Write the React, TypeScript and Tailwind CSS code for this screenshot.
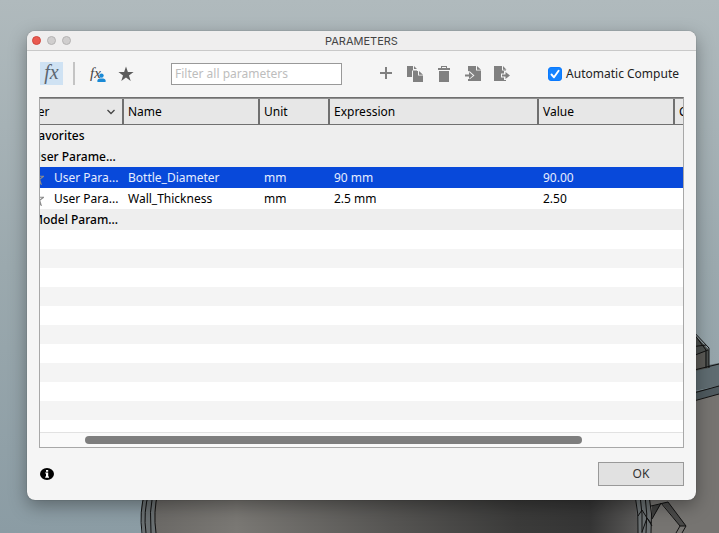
import { useEffect, useLayoutEffect, useRef, useState } from "react";
import type { ReactNode } from "react";

type Row =
  | { kind: "group"; label: string }
  | {
      kind: "param";
      label: string;
      name: string;
      unit: string;
      expression: string;
      value: string;
      selected?: boolean;
    };

const rows: Row[] = [
  { kind: "group", label: "Favorites" },
  { kind: "group", label: "User Parame..." },
  {
    kind: "param",
    label: "User Para...",
    name: "Bottle_Diameter",
    unit: "mm",
    expression: "90 mm",
    value: "90.00",
    selected: true,
  },
  {
    kind: "param",
    label: "User Para...",
    name: "Wall_Thickness",
    unit: "mm",
    expression: "2.5 mm",
    value: "2.50",
  },
  { kind: "group", label: "Model Param..." },
];

function Scene() {
  return (
    <svg
      className="absolute inset-0 h-full w-full"
      viewBox="0 0 719 533"
      preserveAspectRatio="none"
      aria-hidden="true"
    >
      <defs>
        <linearGradient id="sky" x1="0" y1="0" x2="0" y2="1">
          <stop offset="0" stopColor="#b0babd" />
          <stop offset="0.5" stopColor="#9ba9ae" />
          <stop offset="1" stopColor="#8b9ca4" />
        </linearGradient>
        <linearGradient id="body" x1="0" y1="0" x2="1" y2="0">
          <stop offset="0" stopColor="#6b6966" />
          <stop offset="0.17" stopColor="#7a7874" />
          <stop offset="0.5" stopColor="#555452" />
          <stop offset="0.75" stopColor="#3b3b3a" />
          <stop offset="0.9" stopColor="#353535" />
          <stop offset="1" stopColor="#5a5958" />
        </linearGradient>
      </defs>
      <rect width="719" height="533" fill="url(#sky)" />
      <path d="M640 406 719 392V533H640Z" fill="#767471" />
      <path d="M640 378 719 363V386L640 402Z" fill="#5f6c71" />
      <path d="M640 404 719 386V394L640 414Z" fill="#4f5a5f" />
      <path d="M690 330 709 350V368L690 372Z" fill="#4d514f" />
      <path d="M690 355 705 352V368L690 372Z" fill="#5b5a56" />
      <g fill="none" stroke="#111" strokeWidth="1">
        <path d="M690 328 709 348V368M694 334 706 350V368M690 347 706 345M690 357 708 350" />
        <path d="M690 371 719 364M690 394 719 386M690 402 719 394" />
      </g>
      <path d="M145 490Q138 512 143 533H651L649 490Z" fill="#6a7072" />
      <path d="M157 490Q152 512 156 533H638L635 490Z" fill="url(#body)" />
      <g fill="none" stroke="#111" strokeWidth="1">
        <path d="M145 492Q139 512 142 533M149 492Q143 512 146 533M153 492Q149 512 151 533M158 492Q153 512 156 533" />
        <path d="M635 495Q639 514 638 533M640 495Q643 514 642 533M645 495Q648 514 646 533M649 495Q653 514 651 533M638 516 642 510 652 526M642 532 647 518 651 523" />
      </g>
      <path d="M652 506 661 504 652 519Z" fill="#3f3f3e" />
      <path d="M662 503 668 502 686 526 680 526Z" fill="#4a4a49" />
      <path
        d="M651 506 668 502 686 526 682 533M661 503 680 526 676 533M661 503 652 519M680 526 686 526"
        fill="none"
        stroke="#111"
      />
    </svg>
  );
}

function ToolButton({ label, children }: { label: string; children: ReactNode }) {
  return (
    <button
      type="button"
      aria-label={label}
      className="flex h-6 w-6 shrink-0 items-center justify-center text-[#808080]"
    >
      {children}
    </button>
  );
}

function Star({ className, outline }: { className: string; outline?: boolean }) {
  return (
    <svg viewBox="0 0 16 16" className={className} aria-hidden="true">
      <path
        d="M8 .6 9.9 6H15.6L11 9.4 12.7 15 8 11.6 3.3 15 5 9.4 .4 6H6.1Z"
        fill={outline ? "none" : "currentColor"}
        stroke={outline ? "currentColor" : "none"}
        strokeWidth="1.300"
      />
    </svg>
  );
}

function Toolbar() {
  const [compute, setCompute] = useState(true);
  return (
    <div className="flex h-[46px] shrink-0 items-center pr-[17px] pb-px pl-[13px]">
      <button
        type="button"
        aria-label="All parameters"
        aria-pressed="true"
        className="flex h-[23px] w-[23px] shrink-0 items-center justify-center bg-[#cfe2f3] pb-1 font-['Liberation_Serif',serif] text-[20px] leading-none text-[#5c6670] italic"
      >
        fx
      </button>
      <div className="ml-2.5 h-[23px] w-0.5 shrink-0 bg-[#c4c4c4]" />
      <button
        type="button"
        aria-label="User parameters"
        className="relative ml-2.5 h-6 w-6 shrink-0"
      >
        <span className="flex h-[18px] items-center pl-[5px] font-['Liberation_Serif',serif] text-[15px] leading-none text-[#444] italic">
          fx
        </span>
        <svg viewBox="0 0 9 9" className="absolute right-[3px] bottom-1 h-[9px] w-[9px]" aria-hidden="true">
          <circle cx="4.5" cy="2.6" r="2.2" fill="#1a8ad6" />
          <path d="M.4 9V7.6Q.4 5.6 2.6 5.4H6.4Q8.6 5.6 8.6 7.6V9Z" fill="#1a8ad6" />
        </svg>
      </button>
      <button
        type="button"
        aria-label="Favorites"
        className="ml-[5px] flex h-6 w-6 shrink-0 items-center justify-center text-[#5c5c5c]"
      >
        <Star className="h-4 w-4" />
      </button>
      <input
        type="text"
        aria-label="Filter all parameters"
        placeholder="Filter all parameters"
        className="ml-[33px] h-[22px] w-[171px] min-w-0 border border-[#999] bg-white px-[3px] outline-none placeholder:text-[#bdbdbd]"
      />
      <div className="ml-8 flex gap-[5px]">
        <ToolButton label="Add parameter">
          <svg viewBox="0 0 16 16" className="h-4 w-4" aria-hidden="true">
            <path d="M7 1H9V6H14V8H9V13H7V8H2V6H7Z" fill="currentColor" />
          </svg>
        </ToolButton>
        <ToolButton label="Copy parameter">
          <svg viewBox="0 0 16 16" className="h-4 w-4" fill="currentColor" aria-hidden="true">
            <path d="M0 0H6V4H10V4.600H5V11H0ZM7 0 10 3H7Z" />
            <path d="M6 5H11V9.500H16V16H6ZM12 5 16 8.700H12Z" />
          </svg>
        </ToolButton>
        <ToolButton label="Delete parameter">
          <svg viewBox="0 0 16 16" className="h-4 w-4" fill="currentColor" aria-hidden="true">
            <path d="M2 2H5V0H11V2H14V4H2ZM6 1V2H10V1ZM3 5H13V16H3Z" fillRule="evenodd" />
          </svg>
        </ToolButton>
        <ToolButton label="Import parameters">
          <svg viewBox="0 0 16 16" className="h-4 w-4" fill="currentColor" aria-hidden="true">
            <path d="M3 0H11V4.500H16V15H3V13H5L9.500 9.500 5 5.500 3 5ZM12 0 16 3.700H12Z" />
            <path d="M0 8.500H4V6L8 9.500 4 13V10.500H0Z" />
          </svg>
        </ToolButton>
        <ToolButton label="Export parameters">
          <svg viewBox="0 0 16 16" className="h-4 w-4" fill="currentColor" aria-hidden="true">
            <path d="M0 0H8V4.500H12V5H10V7.500H7V11.500H10V14H12V15H0ZM9 0 12.500 3.700H9Z" />
            <path d="M8 8.500H11.500V6L16 9.500 11.500 13V10.500H8Z" />
          </svg>
        </ToolButton>
      </div>
      <label className="ml-auto flex shrink-0 items-center gap-1 text-[#222]">
        <span className="relative flex h-3.5 w-3.5">
          <input
            type="checkbox"
            checked={compute}
            onChange={(e) => setCompute(e.target.checked)}
            className="h-3.5 w-3.5 appearance-none rounded-[3px] border border-[#999] bg-white checked:border-[#0a7aff] checked:bg-[#1483ff]"
          />
          {compute && (
            <svg viewBox="0 0 14 14" className="pointer-events-none absolute inset-0" aria-hidden="true">
              <path
                d="M3.500 7.500 6 10.300 10.600 3.800"
                fill="none"
                stroke="#fff"
                strokeWidth="1.900"
                strokeLinecap="round"
                strokeLinejoin="round"
              />
            </svg>
          )}
        </span>
        Automatic Compute
      </label>
    </div>
  );
}

function HeaderCell({ children }: { children: ReactNode }) {
  return (
    <th className="h-[26px] border-r-2 border-[#707070] px-1 font-normal last:border-r-0">
      {children}
    </th>
  );
}

function ParameterTable() {
  const scroller = useRef<HTMLDivElement>(null);
  const [thumb, setThumb] = useState({ left: 7, width: 77 });

  const measure = () => {
    const el = scroller.current;
    if (!el) return;
    setThumb({
      left: (el.scrollLeft / el.scrollWidth) * 100,
      width: (el.clientWidth / el.scrollWidth) * 100,
    });
  };

  useLayoutEffect(() => {
    if (scroller.current) scroller.current.scrollLeft = 58;
    measure();
  }, []);

  useEffect(() => {
    window.addEventListener("resize", measure);
    return () => window.removeEventListener("resize", measure);
  }, []);

  return (
    <div className="mx-3 flex min-h-0 flex-1 flex-col border border-[#a8a8a8] border-t-[#707070] bg-white">
      <div
        ref={scroller}
        onScroll={measure}
        className="flex min-h-0 flex-1 flex-col overflow-x-auto overflow-y-hidden [scrollbar-width:none]"
      >
        <table className="w-[832px] shrink-0 table-fixed border-separate border-spacing-0 border-t border-[#909090] text-left text-black">
          <colgroup>
            <col className="w-[142px]" />
            <col className="w-[136px]" />
            <col className="w-[70px]" />
            <col className="w-[209px]" />
            <col className="w-[136px]" />
            <col />
          </colgroup>
          <thead className="bg-[#e7e7e7] [&_th]:border-b">
            <tr>
              <HeaderCell>
                <span className="flex items-center justify-between px-1">
                  Parameter
                  <svg viewBox="0 0 10 10" className="-mr-0.5 h-2.5 w-2.5" aria-hidden="true">
                    <path d="M1.500 3 5 6.500 8.500 3" fill="none" stroke="#444" strokeWidth="1.300" />
                  </svg>
                </span>
              </HeaderCell>
              <HeaderCell>Name</HeaderCell>
              <HeaderCell>Unit</HeaderCell>
              <HeaderCell>Expression</HeaderCell>
              <HeaderCell>Value</HeaderCell>
              <HeaderCell>Comments</HeaderCell>
            </tr>
          </thead>
          <tbody>
            {rows.map((row, i) =>
              row.kind === "group" ? (
                <tr key={i} className="h-[21px] bg-[#eee]">
                  <th colSpan={6} scope="rowgroup" className="p-0 pl-[50px] font-medium">
                    {row.label}
                  </th>
                </tr>
              ) : (
                <tr
                  key={i}
                  aria-selected={!!row.selected}
                  className="h-[21px] bg-white aria-selected:bg-[#0849da] aria-selected:text-[#e6edff]"
                >
                  <td className="p-0 pl-12">
                    <span className="flex items-center gap-2.5">
                      <Star outline className="h-3.5 w-3.5 text-[#8c8c8c]" />
                      {row.label}
                    </span>
                  </td>
                  <td className="p-0 pl-1">{row.name}</td>
                  <td className="p-0 pl-1">{row.unit}</td>
                  <td className="p-0 pl-1">{row.expression}</td>
                  <td className="p-0 pl-1">{row.value}</td>
                  <td className="p-0 pl-1" />
                </tr>
              ),
            )}
          </tbody>
        </table>
        <div className="w-[832px] flex-1 bg-[repeating-linear-gradient(#fff_0_19px,#f4f4f4_19px_38px)]" />
      </div>
      <div className="h-[15px] shrink-0 border-t border-[#e2e2e2] bg-[#fafafa] pt-[3px]">
        <div
          className="h-2 rounded-full bg-[#7e7e7e]"
          style={{ marginLeft: `${thumb.left}%`, width: `${thumb.width}%` }}
        />
      </div>
    </div>
  );
}

export default function App() {
  return (
    <main className="relative flex h-screen min-h-[400px] flex-col overflow-hidden pt-[31px] pr-[23px] pb-[33px] pl-[27px] font-['Noto_Sans',sans-serif] text-[12px] leading-4">
      <Scene />
      <section
        role="dialog"
        aria-labelledby="dialog-title"
        className="relative flex min-h-0 flex-1 flex-col overflow-hidden rounded-lg bg-[#f5f5f5] shadow-[0_0_1px_rgba(0,0,0,0.5),0_6px_18px_rgba(0,0,0,0.35)]"
      >
        <header className="grid h-5 shrink-0 grid-cols-[1fr_auto_1fr] items-center border-b border-[#c9c9c9] bg-[#efeeee] px-[5px]">
          <div className="flex gap-1.5">
            <button type="button" aria-label="Close" className="h-[9px] w-[9px] rounded-full border border-[#d0493f] bg-[#ea5a50]" />
            <button type="button" aria-label="Minimize" className="h-[9px] w-[9px] rounded-full border border-[#b5b3b3] bg-[#d0cece]" />
            <button type="button" aria-label="Zoom" className="h-[9px] w-[9px] rounded-full border border-[#b5b3b3] bg-[#d0cece]" />
          </div>
          <h1 id="dialog-title" className="font-['Inter',sans-serif] text-[11px] text-[#444]">
            PARAMETERS
          </h1>
        </header>
        <Toolbar />
        <ParameterTable />
        <footer className="flex h-[52px] shrink-0 items-center justify-between px-3">
          <button type="button" aria-label="Information" className="flex h-4 w-4 items-center justify-center">
            <svg viewBox="0 0 14 12" className="h-3 w-3.5" aria-hidden="true">
              <ellipse cx="7" cy="6" rx="7" ry="6" fill="#000" />
              <path d="M6 2H8.200V3.700H6ZM5.200 4.600H8.200V8.600H9V9.700H5.200V8.600H6V5.600H5.200Z" fill="#fff" />
            </svg>
          </button>
          <button type="button" className="h-6 w-[86px] border border-[#999] bg-[#e1e1e1] text-[#333]">
            OK
          </button>
        </footer>
      </section>
    </main>
  );
}
